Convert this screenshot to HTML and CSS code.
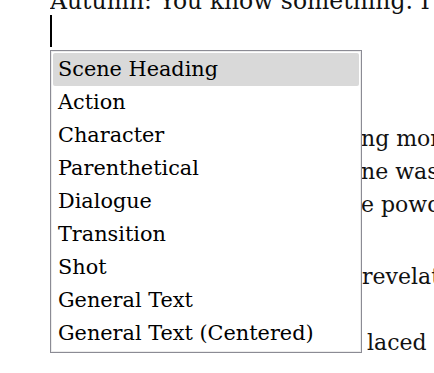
FILE: index.html
```html
<!DOCTYPE html>
<html lang="en">
<head>
    <meta charset="UTF-8">
    <meta name="viewport" content="width=device-width, initial-scale=1.0">
    <title>element picker</title>
    <link rel="stylesheet" href="styles.css">
</head>
<body>

    <div id="root">
        <div class="doc">
            <div class="line top">Autumn: You know something. I</div>
            <div class="caret"></div>
            <div class="para first">
                <div class="line cut">ng morning</div>
                <div class="line cut">ne was</div>
                <div class="line cut">e powder</div>
            </div>
            <div class="para second">
                <div class="line edge">revelation</div>
            </div>
            <div class="para third">
                <div class="line indent">laced</div>
            </div>
        </div>

        <ul class="menu">
            <li class="selected">Scene Heading</li>
            <li>Action</li>
            <li>Character</li>
            <li>Parenthetical</li>
            <li>Dialogue</li>
            <li>Transition</li>
            <li>Shot</li>
            <li>General Text</li>
            <li>General Text (Centered)</li>
        </ul>
    </div>

</body>
</html>
```

FILE: styles.css
```css
html, body {
    margin: 0;
    height: 100%;
    overflow: hidden;
    background: #fff;
}
#root {
    position: relative;
    height: 100%;
    font-family: "DejaVu Serif", "Liberation Serif", serif;
    color: #111;
}
.doc {
    display: flow-root;
    padding-left: 50px;
    font-size: 22px;
}
.line {
    height: 33px;
    line-height: 33px;
    white-space: nowrap;
    overflow: hidden;
}
.top {
    margin-top: -15px;
    font-size: 23.5px;
}
.caret {
    width: 2px;
    height: 32px;
    margin-top: -3px;
    background: #000;
}
.para.first {
    margin-top: 75px;
}
.para.second {
    margin-top: 39px;
}
.para.third {
    margin-top: 33px;
}
.cut {
    padding-left: 311px;
}
.edge {
    padding-left: 312px;
}
.indent {
    padding-left: 317px;
}

/* dropdown over the text */
.menu {
    position: absolute;
    left: 50px;
    top: 50px;
    width: 306px;
    margin: 0;
    padding: 2px;
    list-style: none;
    background: #fff;
    border: 1px solid #8b8b94;
    box-shadow: inset 0 0 0 1px #ececec;
    font-size: 20.8px;
}
.menu li {
    height: 33px;
    line-height: 33px;
    padding-left: 5px;
    white-space: nowrap;
    color: #000;
}
.menu li.selected {
    background: #d9d9d9;
    border-radius: 2px;
}
```
